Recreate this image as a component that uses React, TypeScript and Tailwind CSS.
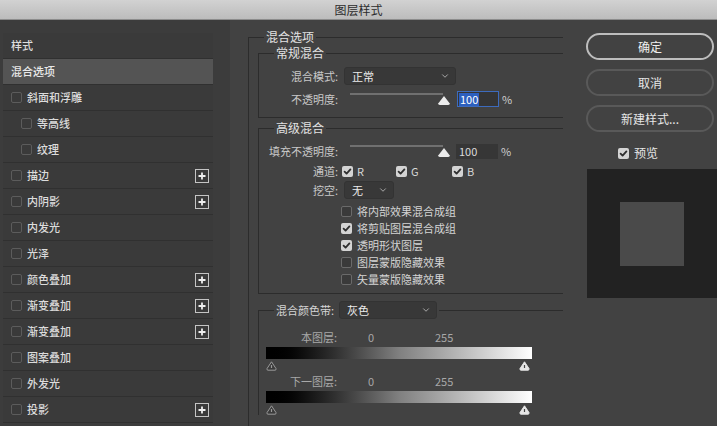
import React from "react";
import { ChevronDown } from "lucide-react";

type Effect = { name: string; indent?: boolean; plus?: boolean };

const effects: Effect[] = [
  { name: "斜面和浮雕" },
  { name: "等高线", indent: true },
  { name: "纹理", indent: true },
  { name: "描边", plus: true },
  { name: "内阴影", plus: true },
  { name: "内发光" },
  { name: "光泽" },
  { name: "颜色叠加", plus: true },
  { name: "渐变叠加", plus: true },
  { name: "渐变叠加", plus: true },
  { name: "图案叠加" },
  { name: "外发光" },
  { name: "投影", plus: true },
];

const Box = ({ checked = false, light = false }: { checked?: boolean; light?: boolean }) =>
  checked ? (
    <span className="flex h-[11px] w-[11px] shrink-0 items-center justify-center rounded-[2px] bg-[#d4d4d4]">
      <svg width="9" height="9" viewBox="0 0 9 9">
        <path d="M1.6 4.6 L3.6 6.6 L7.4 2.4" fill="none" stroke="#2e2e2e" strokeWidth="1.8" strokeLinecap="round" strokeLinejoin="round" />
      </svg>
    </span>
  ) : (
    <span
      className={`h-[11px] w-[11px] shrink-0 rounded-[2px] border ${
        light ? "border-[#6a6a6a]" : "border-[#5c5c5c]"
      } bg-[#3a3a3a]`}
    />
  );

const PlusBtn = () => (
  <span className="flex h-[14px] w-[14px] items-center justify-center border-[1.5px] border-[#c4c4c4]">
    <svg width="10" height="10" viewBox="0 0 10 10">
      <path d="M5 1.5 V8.5 M1.5 5 H8.5" stroke="#eeeeee" strokeWidth="1.8" />
    </svg>
  </span>
);

const Select = ({ value, w }: { value: string; w: string }) => (
  <div
    className={`${w} flex h-[18px] items-center justify-between rounded-[3px] border border-[#333] bg-[#383838] pl-[7px] pr-[5px] text-[11px] text-[#ececec]`}
  >
    <span>{value}</span>
    <ChevronDown size={10} strokeWidth={2} color="#bdbdbd" />
  </div>
);

const Slider = () => (
  <svg width="108" height="16" viewBox="0 0 108 16" className="shrink-0">
    <rect x="6" y="2" width="93" height="2" fill="#707070" />
    <path d="M100 5 L105.6 12.2 Q106.2 14 104.2 14 L95.8 14 Q93.8 14 94.4 12.2 Z" fill="#ececec" />
  </svg>
);

const Thumb = ({ light }: { light?: boolean }) => (
  <svg width="11" height="10" viewBox="0 0 11 10">
    <path
      d="M5.5 0.8 L10 7.6 Q10.4 9.2 9 9.2 L2 9.2 Q0.6 9.2 1 7.6 Z"
      fill={light ? "#e6e6e6" : "#3a3a3a"}
      stroke={light ? "#e6e6e6" : "#9a9a9a"}
      strokeWidth="1"
    />
    <path d="M5.5 4 V7" stroke={light ? "#444" : "#9a9a9a"} strokeWidth="1.2" />
  </svg>
);

const Label = ({ text, dim }: { text: string; dim?: boolean }) => (
  <span className={`w-[79px] shrink-0 text-right text-[11px] ${dim ? "text-[#a8a8a8]" : "text-[#c8c8c8]"}`}>{text}</span>
);

const blendChecks = [
  { text: "将内部效果混合成组", on: false },
  { text: "将剪贴图层混合成组", on: true },
  { text: "透明形状图层", on: true },
  { text: "图层蒙版隐藏效果", on: false },
  { text: "矢量蒙版隐藏效果", on: false },
];

export default function App() {
  return (
    <div className="flex h-[426px] w-[717px] flex-col overflow-hidden bg-[#424242] font-['Noto_Sans_CJK_SC','Liberation_Sans',sans-serif] leading-none">
      {/* title bar */}
      <div className="flex h-[20px] shrink-0 items-center justify-center border-b border-[#8c8c8c] bg-gradient-to-b from-[#d2d2d2] to-[#bcbcbc] text-[12px] text-[#2c2c2c]">
        图层样式
      </div>

      <div className="flex min-h-0 flex-1">
        {/* styles list */}
        <aside className="w-[230px] shrink-0 bg-[#3c3c3c] pl-[3px] pt-[13px]">
          <div className="w-[210px]">
            <div className="flex h-[26px] items-center border-b border-[#303030] bg-[#3a3a3a] pl-[8px] text-[11px] font-medium text-[#dedede]">
              样式
            </div>
            <div className="flex h-[26px] items-center border-b border-[#303030] bg-[#545454] pl-[8px] text-[11px] font-medium text-[#e8e8e8]">
              混合选项
            </div>
            {effects.map((e, i) => (
              <div
                key={i}
                className={`flex h-[26px] items-center border-b border-[#303030] bg-[#3a3a3a] pr-[4px] ${
                  e.indent ? "pl-[18px]" : "pl-[8px]"
                }`}
              >
                <Box />
                <span className="ml-[5px] flex-1 text-[11px] font-medium text-[#dcdcdc]">{e.name}</span>
                {e.plus && <PlusBtn />}
              </div>
            ))}
          </div>
        </aside>

        {/* blending options */}
        <fieldset className="ml-[18px] mt-[9px] w-[315px] shrink-0 border-l border-t border-[#2c2c2c]">
          <legend className="ml-[15px] px-[2px] text-[12px] leading-[16px] text-[#e2e2e2]">混合选项</legend>

          <fieldset className="ml-[9px] w-[305px] border-b border-l border-t border-[#2c2c2c] pb-[10px] pt-[6px]">
            <legend className="ml-[15px] px-[2px] text-[12px] leading-[16px] text-[#e2e2e2]">常规混合</legend>
            <div className="flex h-[18px] items-center">
              <Label text="混合模式:" />
              <div className="ml-[6px]">
                <Select value="正常" w="w-[112px]" />
              </div>
            </div>
            <div className="mt-[6px] flex h-[16px] items-center">
              <Label text="不透明度:" />
              <div className="ml-[6px]">
                <Slider />
              </div>
              <div className="ml-[5px] flex h-[16px] w-[42px] items-center border border-[#3d6bbd] bg-[#353535] pl-[1px]">
                <span className="bg-[#2c5fbf] px-[1px] text-[11px] leading-[13px] text-white">100</span>
              </div>
              <span className="ml-[3px] text-[11px] text-[#d0d0d0]">%</span>
            </div>
          </fieldset>

          <fieldset className="ml-[9px] mt-[2px] w-[305px] border-b border-l border-t border-[#2c2c2c] pb-[5px] pt-[7px]">
            <legend className="ml-[15px] px-[2px] text-[12px] leading-[16px] text-[#e2e2e2]">高级混合</legend>
            <div className="flex h-[16px] items-center">
              <Label text="填充不透明度:" />
              <div className="ml-[6px]">
                <Slider />
              </div>
              <div className="ml-[4px] flex h-[15px] w-[42px] items-center bg-[#363636] pl-[3px] text-[11px] text-[#dadada]">
                100
              </div>
              <span className="ml-[3px] text-[11px] text-[#d0d0d0]">%</span>
            </div>
            <div className="mt-[4px] flex h-[16px] items-center">
              <Label text="通道:" />
              <div className="ml-[4px] flex w-[54px] items-center gap-[4px]">
                <Box checked />
                <span className="text-[11px] text-[#d8d8d8]">R</span>
              </div>
              <div className="flex w-[56px] items-center gap-[4px]">
                <Box checked />
                <span className="text-[11px] text-[#d8d8d8]">G</span>
              </div>
              <div className="flex items-center gap-[4px]">
                <Box checked />
                <span className="text-[11px] text-[#d8d8d8]">B</span>
              </div>
            </div>
            <div className="mt-[2px] flex h-[18px] items-center">
              <Label text="挖空:" />
              <div className="ml-[6px]">
                <Select value="无" w="w-[50px]" />
              </div>
            </div>
            <div className="mt-[4px] flex flex-col">
              {blendChecks.map((c) => (
                <div key={c.text} className="flex h-[17px] items-center pl-[82px]">
                  <Box checked={c.on} light />
                  <span className="ml-[5px] text-[11px] text-[#d4d4d4]">{c.text}</span>
                </div>
              ))}
            </div>
          </fieldset>

          <fieldset className="ml-[9px] mt-[7px] w-[305px] border-l border-t border-[#2c2c2c]">
            <legend className="ml-[15px] flex items-center px-[2px]">
              <span className="text-[11px] text-[#d4d4d4]">混合颜色带:</span>
              <div className="ml-[5px]">
                <Select value="灰色" w="w-[98px]" />
              </div>
            </legend>
            <div className="mt-[11px] flex h-[14px] items-center text-[11px] text-[#a8a8a8]">
              <span className="w-[78px] text-right">本图层:</span>
              <span className="ml-[31px] w-[67px]">0</span>
              <span>255</span>
            </div>
            <div className="ml-[7px] mt-[3px] h-[12px] w-[266px] bg-gradient-to-r from-black via-[#808080] to-white" />
            <div className="ml-[7px] mt-[2px] flex w-[264px] justify-between">
              <Thumb />
              <Thumb light />
            </div>
            <div className="mt-[3px] flex h-[14px] items-center text-[11px] text-[#a8a8a8]">
              <span className="w-[78px] text-right">下一图层:</span>
              <span className="ml-[31px] w-[67px]">0</span>
              <span>255</span>
            </div>
            <div className="ml-[7px] mt-[3px] h-[12px] w-[266px] bg-gradient-to-r from-black via-[#808080] to-white" />
            <div className="ml-[7px] mt-[2px] flex w-[264px] justify-between">
              <Thumb />
              <Thumb light />
            </div>
          </fieldset>
        </fieldset>

        {/* buttons + preview */}
        <div className="ml-[23px] flex w-[140px] shrink-0 flex-col pt-[13px]">
          <div className="flex w-[128px] flex-col gap-[9px]">
            <button className="flex h-[27px] items-center justify-center rounded-full border-2 border-[#bdbdbd] text-[12px] text-[#f0f0f0]">
              确定
            </button>
            <button className="flex h-[27px] items-center justify-center rounded-full border-2 border-[#595959] text-[12px] text-[#e6e6e6]">
              取消
            </button>
            <button className="flex h-[27px] items-center justify-center rounded-full border-2 border-[#595959] text-[12px] text-[#e6e6e6]">
              新建样式...
            </button>
          </div>
          <div className="ml-[32px] mt-[14px] flex h-[14px] items-center gap-[5px]">
            <Box checked />
            <span className="text-[12px] text-[#e6e6e6]">预览</span>
          </div>
          <div className="ml-[1px] mt-[9px] flex h-[129px] w-[140px] items-start bg-[#222222] pl-[33px] pt-[33px]">
            <div className="h-[64px] w-[64px] bg-[#4a4a4a]" />
          </div>
        </div>
      </div>
    </div>
  );
}
